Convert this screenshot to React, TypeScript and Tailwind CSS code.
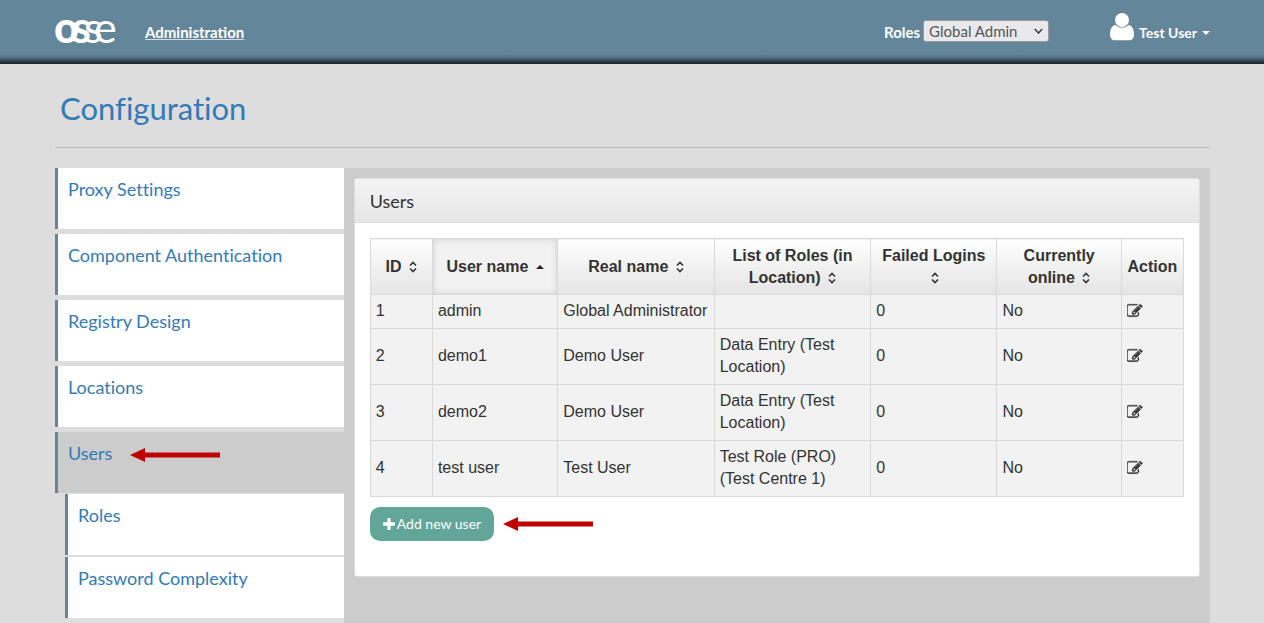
import React from "react";

interface UserRow {
  id: number;
  userName: string;
  realName: string;
  roles: string;
  failedLogins: number;
  online: string;
}

interface Column {
  label: string;
  width: string;
  sort: "both" | "asc" | "none";
}

const columns: Column[] = [
  { label: "ID", width: "w-[62px]", sort: "both" },
  { label: "User name", width: "w-[125px]", sort: "asc" },
  { label: "Real name", width: "w-[156px]", sort: "both" },
  { label: "List of Roles (in Location)", width: "w-[156px]", sort: "both" },
  { label: "Failed Logins", width: "w-[126px]", sort: "both" },
  { label: "Currently online", width: "w-[124px]", sort: "both" },
  { label: "Action", width: "w-[62px]", sort: "none" },
];

const users: UserRow[] = [
  { id: 1, userName: "admin", realName: "Global Administrator", roles: "", failedLogins: 0, online: "No" },
  { id: 2, userName: "demo1", realName: "Demo User", roles: "Data Entry (Test Location)", failedLogins: 0, online: "No" },
  { id: 3, userName: "demo2", realName: "Demo User", roles: "Data Entry (Test Location)", failedLogins: 0, online: "No" },
  { id: 4, userName: "test user", realName: "Test User", roles: "Test Role (PRO) (Test Centre 1)", failedLogins: 0, online: "No" },
];

const menuItems = ["Proxy Settings", "Component Authentication", "Registry Design", "Locations", "Users"];
const subItems = ["Roles", "Password Complexity"];

const Logo: React.FC = () => (
  <svg className="overflow-visible" width="62" height="28" viewBox="0 0 62 28" fill="#fff" role="img" aria-label="osse">
    <g fontFamily="Lato, sans-serif" fontSize="43">
      <text x="-1" y="25" fontWeight="900">o</text>
      <text x="17" y="25" fontWeight="700">s</text>
      <text x="29" y="25" fontWeight="400">s</text>
      <text x="39" y="25" fontWeight="400">e</text>
    </g>
  </svg>
);

const UserIcon: React.FC = () => (
  <svg width="24" height="28" viewBox="0 0 24 28" fill="#fff" aria-hidden="true">
    <path d="M5.500 12C2 12.600 0 16 0 21.500C0 25 2 27.300 5 27.300H19C22 27.300 24 25 24 21.500C24 16 22 12.600 18.500 12C17 13.600 14.700 14.600 12 14.600C9.300 14.600 7 13.600 5.500 12Z" />
    <circle cx="12" cy="7" r="7" />
  </svg>
);

const RedArrow: React.FC = () => (
  <svg width="90" height="14" viewBox="0 0 90 14" fill="#c00000" aria-hidden="true">
    <path d="M0 7L15 0V4.500H90V9.500H15V14Z" />
  </svg>
);

const EditIcon: React.FC = () => (
  <svg width="16" height="16" viewBox="64 0 1792 1792" fill="currentColor" stroke="currentColor" strokeWidth="30" aria-hidden="true">
    <path d="M888 1184l116-116-152-152-116 116v56h96v96h56zm440-720q-16-16-33 1l-350 350q-17 17-1 33t33-1l350-350q17-17 1-33zm80 594v190q0 119-84.500 203.500t-203.500 84.500h-832q-119 0-203.500-84.500t-84.500-203.500v-832q0-119 84.500-203.500t203.500-84.500h832q63 0 117 25 15 7 18 23 3 17-9 29l-49 49q-14 14-32 8-23-6-45-6h-832q-66 0-113 47t-47 113v832q0 66 47 113t113 47h832q66 0 113-47t47-113v-126q0-13 9-22l64-64q15-15 35-7t20 29zm-96-738l288 288-672 672h-288v-288zm444 132l-92 92-288-288 92-92q28-28 68-28t68 28l152 152q28 28 28 68t-28 68z" />
  </svg>
);

const PlusIcon: React.FC = () => (
  <svg width="12" height="12" viewBox="192 128 1408 1408" fill="currentColor" aria-hidden="true">
    <path d="M1600 736v192q0 40-28 68t-68 28h-416v416q0 40-28 68t-68 28h-192q-40 0-68-28t-28-68v-416h-416q-40 0-68-28t-28-68v-192q0-40 28-68t68-28h416v-416q0-40 28-68t68-28h192q40 0 68 28t28 68v416h416q40 0 68 28t28 68z" />
  </svg>
);

const SortIcon: React.FC<{ sort: Column["sort"] }> = ({ sort }) => {
  if (sort === "none") return null;
  return (
    <svg className="ml-[3px] inline-block align-[-1px]" width="8" height="12" viewBox="0 0 8 12" aria-hidden="true">
      {sort === "asc" ? (
        <path d="M0 8L4 4L8 8Z" fill="#222" />
      ) : (
        <path d="M1 4.500L4 1.500L7 4.500M1 7.500L4 10.500L7 7.500" fill="none" stroke="#333" strokeWidth="1.600" />
      )}
    </svg>
  );
};

const Navbar: React.FC = () => (
  <header className="h-16 shrink-0 bg-[#64869a] bg-linear-to-b from-[#64869a] from-84% via-[#52707f] via-90% to-[#17222a] pl-[55px] pr-[54px]">
    <div className="flex h-full items-center">
      <a href="#">
        <Logo />
      </a>
      <a href="#" className="ml-7 text-[15px] font-bold text-white underline decoration-white/70">
        Administration
      </a>
      <div className="ml-auto flex items-center gap-[3px]">
        <label htmlFor="role" className="text-[15px] font-bold text-white">
          Roles
        </label>
        <div className="relative -mt-0.5">
          <select
            id="role"
            className="block h-[22px] w-[126px] appearance-none rounded-[3px] border border-[#9b98a3] bg-[#e9e9ed] pl-[5px] text-[15px] leading-5 text-[#555]"
          >
            <option>Global Admin</option>
          </select>
          <svg className="pointer-events-none absolute right-1.5 top-2" width="9" height="7" viewBox="0 0 9 7" aria-hidden="true">
            <path d="M0.800 1L4.500 5L8.200 1" fill="none" stroke="#444" strokeWidth="1.600" />
          </svg>
        </div>
      </div>
      <button className="ml-[61px] flex items-end gap-[5px] pb-2.5 text-sm font-bold text-white">
        <UserIcon />
        <span className="-mb-0.5 leading-5">Test User</span>
        <svg className="mb-1.5" width="8" height="4" viewBox="0 0 8 4" fill="#fff" aria-hidden="true">
          <path d="M0 0H8L4 4Z" />
        </svg>
      </button>
    </div>
  </header>
);

const Sidebar: React.FC = () => (
  <nav className="w-1/4 shrink-0 text-lg leading-6 text-[#337ab7] [font-variant-ligatures:none]">
    <ul className="flex flex-col gap-[5px]">
      {menuItems.map((item) => (
        <li key={item}>
          <a
            href="#"
            className={`flex h-[61px] gap-[18px] border-l-[3px] border-[#64869a] pl-[10px] pt-[9px] ${
              item === "Users" ? "bg-[#ccc]" : "bg-white"
            }`}
          >
            {item}
            {item === "Users" && (
              <span className="pt-[7px]">
                <RedArrow />
              </span>
            )}
          </a>
        </li>
      ))}
    </ul>
    <ul className="mt-px flex flex-col gap-[2px] pl-[10px]">
      {subItems.map((item) => (
        <li key={item}>
          <a href="#" className="flex h-[61px] border-l-[3px] border-[#64869a] bg-white pl-[10px] pt-[9px]">
            {item}
          </a>
        </li>
      ))}
    </ul>
  </nav>
);

const UsersTable: React.FC = () => (
  <table className="w-full table-fixed border-collapse font-['Liberation_Sans',sans-serif] text-base leading-[22px] text-[#333]">
    <thead>
      <tr>
        {columns.map((col) => (
          <th
            key={col.label}
            className={`border border-[#d9d9d9] px-[5px] pb-[5px] pt-[6px] text-center font-bold ${col.width} ${
              col.sort === "asc"
                ? "bg-[#f2f2f2] shadow-[inset_0_0_6px_#ccc]"
                : "bg-linear-to-b from-white to-[#e4e4e4]"
            }`}
          >
            {col.label}{" "}
            <SortIcon sort={col.sort} />
          </th>
        ))}
      </tr>
    </thead>
    <tbody>
      {users.map((user) => (
        <tr key={user.id} className="bg-[#f2f2f2] *:border *:border-[#d9d9d9] *:px-[5px] *:pb-[6px] *:pt-[5px]">
          <td>{user.id}</td>
          <td>{user.userName}</td>
          <td>{user.realName}</td>
          <td>{user.roles}</td>
          <td>{user.failedLogins}</td>
          <td>{user.online}</td>
          <td>
            <button className="block" aria-label="Edit">
              <EditIcon />
            </button>
          </td>
        </tr>
      ))}
    </tbody>
  </table>
);

const App: React.FC = () => {
  return (
    <div className="flex min-h-screen flex-col bg-[#ddd] font-[Lato,sans-serif]">
      <Navbar />
      <div className="flex grow flex-col pl-[55px] pr-[54px]">
        <h1 className="mb-5 border-b border-[#bbb] pb-[19px] pl-[5px] pt-6 text-[31px] leading-10 text-[#337ab7] [font-variant-ligatures:none]">
          Configuration
        </h1>
        <div className="flex grow">
          <Sidebar />
          <main className="min-w-0 grow bg-[#ccc] p-[10px]">
            <section className="rounded-[3px] border border-[#ddd] bg-white">
              <h2 className="rounded-t-[3px] border-b border-[#ddd] bg-linear-to-b from-[#f4f4f4] to-[#e6e6e6] px-[15px] pb-[9px] pt-[10px] text-lg leading-6 text-[#333]">
                Users
              </h2>
              <div className="px-[15px] pb-[35px] pt-[15px]">
                <UsersTable />
                <div className="mt-[10px] flex items-center gap-[9px]">
                  <button className="flex h-[34px] items-center gap-[2px] rounded-[10px] bg-[#62a699] px-[13px] text-sm text-white">
                    <PlusIcon />
                    Add new user
                  </button>
                  <RedArrow />
                </div>
              </div>
            </section>
          </main>
        </div>
      </div>
    </div>
  );
};

export default App;
